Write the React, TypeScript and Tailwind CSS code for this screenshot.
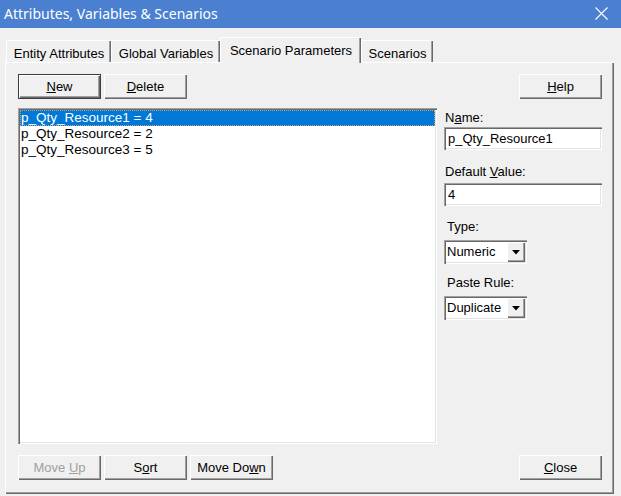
import React from "react";

const raised =
  "shadow-[inset_1px_1px_0_#ffffff,inset_-1px_-1px_0_#696969,inset_-2px_-2px_0_#a0a0a0]";
const sunken =
  "shadow-[inset_1px_1px_0_#a0a0a0,inset_2px_2px_0_#696969,inset_-1px_-1px_0_#ffffff,inset_-2px_-2px_0_#e3e3e3]";

function Btn({
  children,
  def,
  disabled,
}: {
  children: React.ReactNode;
  def?: boolean;
  disabled?: boolean;
}) {
  return (
    <div
      className={`h-[25px] w-[83px] flex items-center justify-center bg-[#f0f0f0] ${
        def ? "border border-[#3c3c3c]" : ""
      } ${raised} ${disabled ? "text-[#a0a0a0]" : "text-black"}`}
    >
      {children}
    </div>
  );
}

function Field({ value }: { value: string }) {
  return (
    <div className={`h-[23px] w-[158px] bg-white pl-[4px] flex items-center ${sunken}`}>
      {value}
    </div>
  );
}

function Combo({ value }: { value: string }) {
  return (
    <div className={`h-[24px] w-[83px] bg-white flex items-center pl-[3px] pr-[2px] ${sunken}`}>
      <div className="flex-1 overflow-hidden whitespace-nowrap">{value}</div>
      <div className={`h-[20px] w-[18px] bg-[#f0f0f0] flex items-center justify-center ${raised}`}>
        <svg width="8" height="5" viewBox="0 0 8 5">
          <path d="M0 0h8L4 4.5z" fill="#000" />
        </svg>
      </div>
    </div>
  );
}

function Tab({ label, active, w }: { label: string; active?: boolean; w: string }) {
  if (active) {
    return (
      <div
        className={`${w} h-[26px] -mb-[1px] relative z-10 bg-[#f0f0f0] border-t border-l border-white rounded-tl-[2px] shadow-[inset_-1px_0_0_#696969,inset_-2px_0_0_#a0a0a0] flex justify-center pt-[3px]`}
      >
        {label}
      </div>
    );
  }
  return (
    <div
      className={`${w} h-[22px] bg-[#f0f0f0] border-t border-l border-white rounded-tl-[2px] shadow-[inset_-1px_0_0_#696969,inset_-2px_0_0_#a0a0a0] flex justify-center pt-[3px]`}
    >
      {label}
    </div>
  );
}

export default function App() {
  const items = ["p_Qty_Resource1 = 4", "p_Qty_Resource2 = 2", "p_Qty_Resource3 = 5"];
  return (
    <div
      className="w-[621px] h-[496px] bg-[#f0f0f0] flex flex-col text-[13px] text-black overflow-hidden"
      style={{ fontFamily: '"Liberation Sans", Arial, sans-serif' }}
    >
      <div className="h-[28px] bg-[#4a80cf] flex items-center justify-between pl-[4px] pr-[13px] text-white">
        <div
          className="text-[14px] leading-none -mt-[1px]"
          style={{ fontFamily: '"Noto Sans", "Open Sans", sans-serif' }}
        >
          Attributes, Variables &amp; Scenarios
        </div>
        <svg width="13" height="13" viewBox="0 0 13 13" className="-mt-[1px]">
          <path d="M0.5 0.5L12.5 12.5M12.5 0.5L0.5 12.5" stroke="#fff" strokeWidth="1.1" />
        </svg>
      </div>

      <div className="flex-1 flex flex-col pl-[5px] pr-[7px] pt-[9px] pb-[2px]">
        <div className="h-[25px] flex items-end pl-[1px]">
          <Tab label="Entity Attributes" w="w-[105px]" />
          <Tab label="Global Variables" w="w-[109px]" />
          <Tab label="Scenario Parameters" w="w-[141px]" active />
          <Tab label="Scenarios" w="w-[72px]" />
        </div>

        <div
          className={`flex-1 flex flex-col pl-[12px] pr-[12px] pt-[11px] pb-[14px] border-t border-l border-white shadow-[inset_-1px_-1px_0_#696969,inset_-2px_-2px_0_#a0a0a0]`}
        >
          <div className="h-[25px] flex items-center gap-[3px]">
            <Btn def>
              <span>
                <span className="underline">N</span>ew
              </span>
            </Btn>
            <Btn>
              <span>
                <span className="underline">D</span>elete
              </span>
            </Btn>
            <div className="flex-1" />
            <Btn>
              <span>
                <span className="underline">H</span>elp
              </span>
            </Btn>
          </div>

          <div className="mt-[9px] h-[336px] flex gap-[7px]">
            <div className={`w-[420px] h-full bg-white p-[2px] text-[13.5px] ${sunken}`}>
              {items.map((t, i) =>
                i === 0 ? (
                  <div
                    key={t}
                    className="h-[16px] leading-[14px] bg-[#0078d7] text-white border border-dotted border-[#c9a26e]"
                  >
                    {t}
                  </div>
                ) : (
                  <div key={t} className="h-[16px] leading-[16px] pl-[1px]">
                    {t}
                  </div>
                )
              )}
            </div>

            <div className="w-[158px] flex flex-col">
              <div className="mt-[2px] h-[16px] leading-[16px] pl-[1px]">
                N<span className="underline">a</span>me:
              </div>
              <div className="mt-[1px]">
                <Field value="p_Qty_Resource1" />
              </div>
              <div className="mt-[14px] h-[16px] leading-[16px] pl-[1px]">
                Default <span className="underline">V</span>alue:
              </div>
              <div className="mt-[3px]">
                <Field value="4" />
              </div>
              <div className="mt-[13px] h-[16px] leading-[16px] pl-[3px]">Type:</div>
              <div className="mt-[5px]">
                <Combo value="Numeric" />
              </div>
              <div className="mt-[11px] h-[16px] leading-[16px] pl-[3px]">Paste Rule:</div>
              <div className="mt-[5px]">
                <Combo value="Duplicate" />
              </div>
            </div>
          </div>

          <div className="mt-[11px] h-[25px] flex items-center gap-[3px]">
            <Btn disabled>
              <span>
                Move <span className="underline">U</span>p
              </span>
            </Btn>
            <Btn>
              <span>
                S<span className="underline">o</span>rt
              </span>
            </Btn>
            <Btn>
              <span>
                Move Do<span className="underline">w</span>n
              </span>
            </Btn>
            <div className="flex-1" />
            <Btn>
              <span>
                <span className="underline">C</span>lose
              </span>
            </Btn>
          </div>
        </div>
      </div>
    </div>
  );
}
